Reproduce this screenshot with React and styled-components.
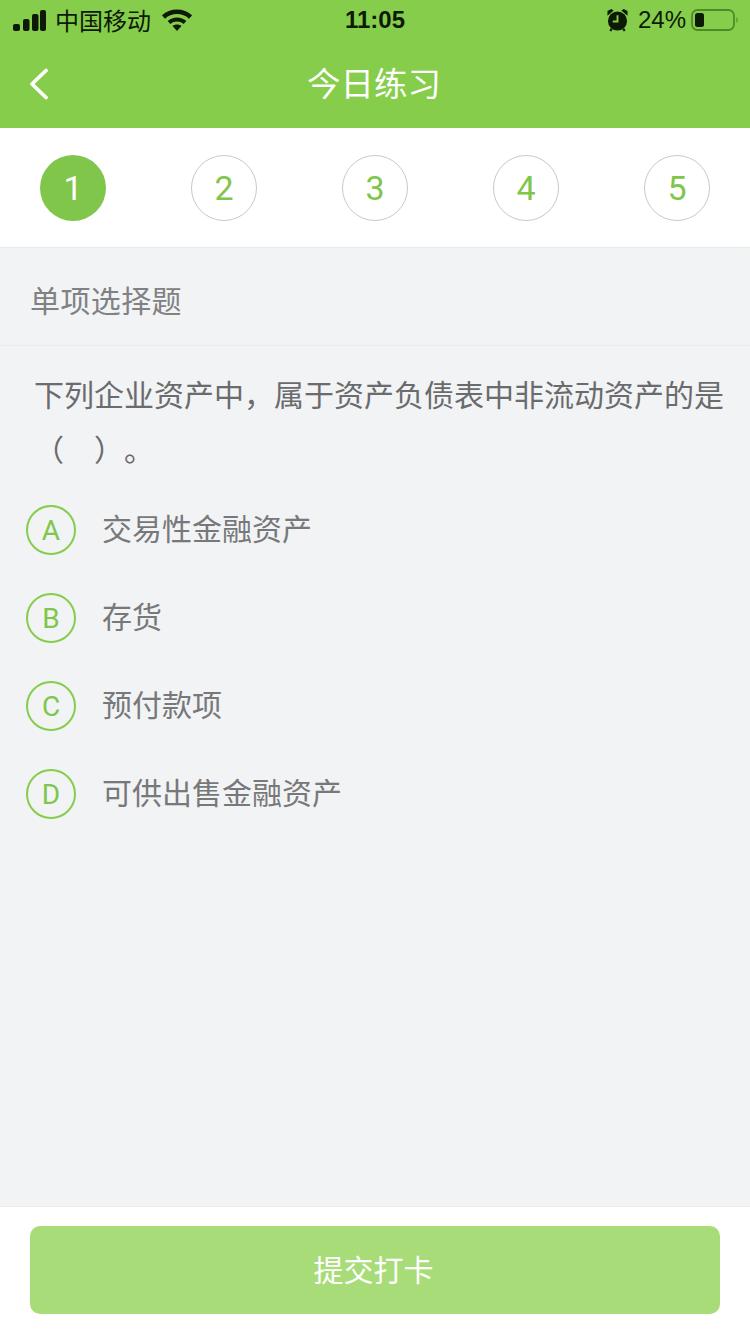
import styled, { createGlobalStyle } from 'styled-components'

const cjk = `"Noto Sans CJK SC", "Noto Sans", sans-serif`
const latin = `"Liberation Sans", "Noto Sans CJK SC", sans-serif`
const round = `Roboto, "Liberation Sans", sans-serif`

const GlobalStyle = createGlobalStyle`
  html, body {
    margin: 0;
    padding: 0;
    background: #f2f3f5;
  }
  * {
    box-sizing: border-box;
  }
`

const Page = styled.div`
  width: 750px;
  height: 1334px;
  display: flex;
  flex-direction: column;
  background: #f2f3f5;
  overflow: hidden;
  font-family: ${cjk};
`

const Header = styled.header`
  background: #86cd4b;
  height: 128px;
  flex: none;
`

const StatusBar = styled.div`
  height: 40px;
  padding: 0 11px 0 13px;
  display: grid;
  grid-template-columns: 1fr auto 1fr;
  align-items: center;
  color: #0c1a06;
`

const StatusLeft = styled.div`
  display: flex;
  align-items: center;
  gap: 9px;
  font-size: 24px;
  line-height: 40px;
`

const StatusRight = styled.div`
  display: flex;
  align-items: center;
  justify-content: flex-end;
  font-family: ${latin};
  font-size: 24px;
`

const Clock = styled.div`
  padding-right: 2px;
  font-family: ${latin};
  font-size: 24px;
  font-weight: 700;
`

const Percent = styled.span`
  margin: 0 5px 0 10px;
`

const NavBar = styled.div`
  height: 88px;
  display: flex;
  align-items: center;
  justify-content: center;
  position: relative;
`

const BackButton = styled.button`
  position: absolute;
  left: 29px;
  top: 28px;
  width: 20px;
  height: 32px;
  padding: 0;
  border: none;
  background: transparent;
  display: block;
`

const Title = styled.h1`
  margin: 0 2px 5px 0;
  font-size: 33.5px;
  line-height: 44px;
  font-weight: 400;
  color: #ffffff;
`

const Stepper = styled.nav`
  height: 120px;
  flex: none;
  background: #ffffff;
  border-bottom: 1px solid #e8e9eb;
  padding: 27px 40px 0;
  display: flex;
  justify-content: space-between;
  align-items: flex-start;
`

const Step = styled.div`
  width: 66px;
  height: 66px;
  border-radius: 50%;
  display: flex;
  align-items: center;
  justify-content: center;
  font-family: ${round};
  font-size: 34px;
  color: ${({ $active }) => ($active ? '#ffffff' : '#7fc64a')};
  background: ${({ $active }) => ($active ? '#7fc64a' : '#ffffff')};
  border: ${({ $active }) => ($active ? 'none' : '1px solid #c9c9c9')};
`

const SectionHeading = styled.div`
  height: 98px;
  flex: none;
  padding: 4px 30px 0;
  display: flex;
  align-items: center;
  border-bottom: 1px solid #e9eaec;
  font-size: 30px;
  letter-spacing: 0.4px;
  color: #808183;
`

const Body = styled.main`
  flex: 1;
  min-height: 0;
`

const Question = styled.p`
  margin: 0;
  padding: 20px 20px 0 34px;
  font-size: 30px;
  line-height: 55px;
  text-spacing-trim: space-all;
  color: #6a6b6d;
`

const Options = styled.ul`
  list-style: none;
  margin: 0;
  padding: 29px 0 0 26px;
  display: flex;
  flex-direction: column;
  gap: 38px;
`

const Option = styled.li`
  display: flex;
  align-items: center;
  gap: 26px;
  height: 50px;
`

const OptionBadge = styled.span`
  width: 50px;
  height: 50px;
  flex: none;
  border: 2px solid #86cd4b;
  border-radius: 50%;
  display: flex;
  align-items: center;
  justify-content: center;
  font-family: ${round};
  font-size: 28px;
  color: #7fc64a;
`

const OptionText = styled.span`
  font-size: 30px;
  line-height: 50px;
  padding-bottom: 7px;
  color: #77787a;
`

const Footer = styled.footer`
  height: 128px;
  flex: none;
  background: #ffffff;
  border-top: 1px solid #ebebeb;
  padding: 19px 30px 0;
`

const SubmitButton = styled.button`
  display: block;
  width: 100%;
  height: 88px;
  padding: 0 3px 4px 0;
  border: none;
  border-radius: 10px;
  background: #a8dc78;
  color: #ffffff;
  font-family: ${cjk};
  font-size: 30px;
`

const SignalIcon = () => (
  <svg width="33" height="21" viewBox="0 0 33 21" fill="#0c1a06">
    <rect x="0" y="14" width="7" height="7" rx="2" />
    <rect x="10" y="9" width="6.500" height="12" rx="2" />
    <rect x="19" y="4" width="6.500" height="17" rx="2" />
    <rect x="27" y="0" width="6" height="21" rx="2" />
  </svg>
)

const WifiIcon = () => (
  <svg width="32" height="22" viewBox="-2 0 32 22" fill="none" stroke="#0c1a06">
    <path d="M1.500 8C9 1 21 1 28.500 8" strokeWidth="4.500" />
    <path d="M7 13.500C11.500 9.500 18.500 9.500 23 13.500" strokeWidth="4" />
    <path d="M15 22L10.500 17C13 15 17 15 19.500 17Z" fill="#0c1a06" stroke="none" />
  </svg>
)

const AlarmIcon = () => (
  <svg width="21" height="24" viewBox="0 0 22 24">
    <circle cx="11" cy="13" r="10" fill="#0c1a06" />
    <path d="M0.500 7.500L7 2 4.500 0.500 0.500 2.500ZM21.500 7.500L15 2 17.500 0.500 21.500 2.500Z" fill="#0c1a06" />
    <path d="M11 7V13.500H6" fill="none" stroke="#86cd4b" strokeWidth="2" />
    <path d="M5 21L3.500 23.500M17 21L18.500 23.500" stroke="#0c1a06" strokeWidth="2.200" />
  </svg>
)

const BatteryIcon = () => (
  <svg width="48" height="24" viewBox="0 0 48 24">
    <rect x="1" y="2" width="42" height="20" rx="5.500" fill="none" stroke="#4f8a2a" strokeWidth="1.800" />
    <rect x="4" y="5" width="9" height="14" rx="2.500" fill="#0c1a06" />
    <path d="M45.500 9C47 9.800 47 14.200 45.500 15Z" fill="#4f8a2a" />
  </svg>
)

const BackIcon = () => (
  <svg width="20" height="32" viewBox="0 0 20 32" fill="none" stroke="#ffffff" strokeWidth="3.800" strokeLinecap="round" strokeLinejoin="round">
    <path d="M17 2.500L3 16l14 13.500" />
  </svg>
)

const steps = [1, 2, 3, 4, 5]

const options = [
  { key: 'A', text: '交易性金融资产' },
  { key: 'B', text: '存货' },
  { key: 'C', text: '预付款项' },
  { key: 'D', text: '可供出售金融资产' },
]

export default function App() {
  return (
    <>
      <GlobalStyle />
      <Page>
        <Header>
          <StatusBar>
            <StatusLeft>
              <SignalIcon />
              <span>中国移动</span>
              <WifiIcon />
            </StatusLeft>
            <Clock>11:05</Clock>
            <StatusRight>
              <AlarmIcon />
              <Percent>24%</Percent>
              <BatteryIcon />
            </StatusRight>
          </StatusBar>
          <NavBar>
            <BackButton aria-label="返回">
              <BackIcon />
            </BackButton>
            <Title>今日练习</Title>
          </NavBar>
        </Header>
        <Stepper>
          {steps.map((n) => (
            <Step key={n} $active={n === 1}>{n}</Step>
          ))}
        </Stepper>
        <SectionHeading>单项选择题</SectionHeading>
        <Body>
          <Question>下列企业资产中，属于资产负债表中非流动资产的是（　）。</Question>
          <Options>
            {options.map((o) => (
              <Option key={o.key}>
                <OptionBadge>{o.key}</OptionBadge>
                <OptionText>{o.text}</OptionText>
              </Option>
            ))}
          </Options>
        </Body>
        <Footer>
          <SubmitButton>提交打卡</SubmitButton>
        </Footer>
      </Page>
    </>
  )
}
